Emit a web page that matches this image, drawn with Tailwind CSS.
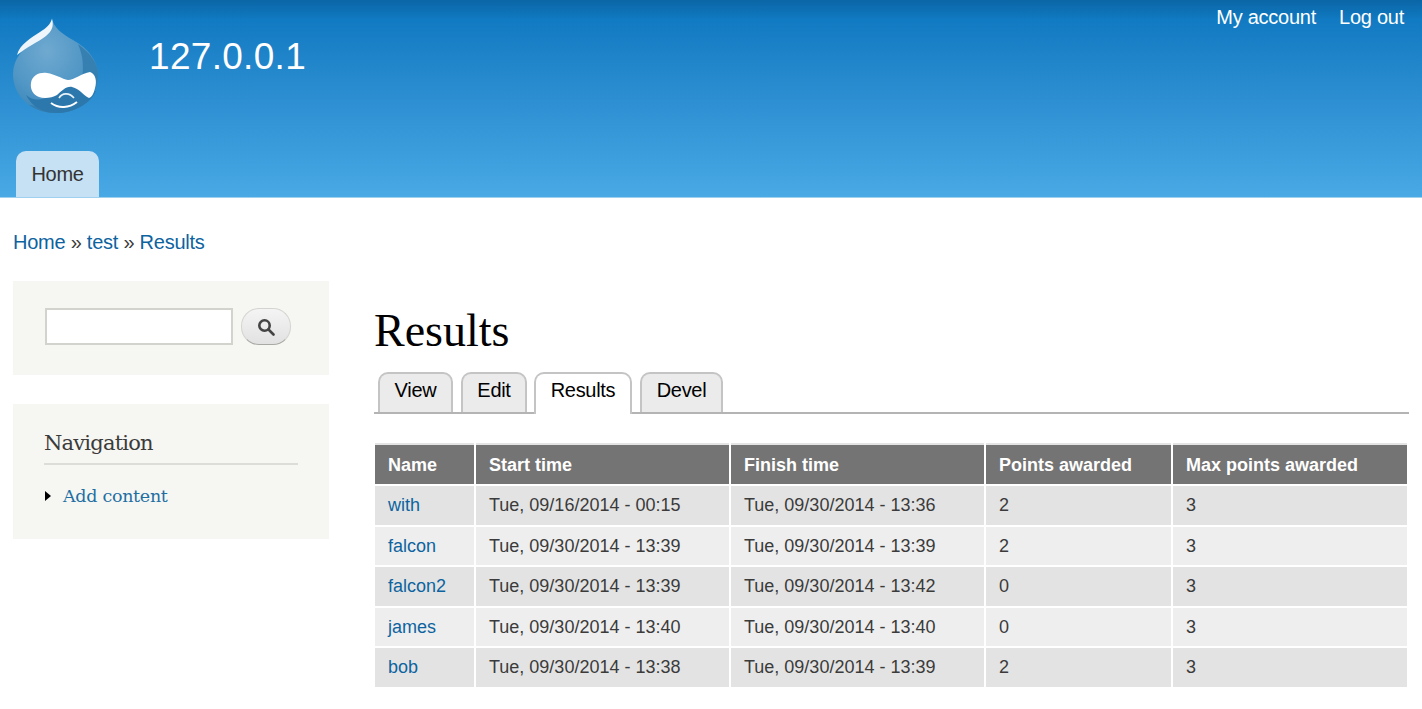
<!DOCTYPE html>
<html lang="en">
  <head>
    <meta charset="UTF-8" />
    <title>Results | 127.0.0.1</title>
    <script src="https://cdn.jsdelivr.net/npm/@tailwindcss/browser@4"></script>
  </head>
  <body class="bg-white text-[#3b3b3b] font-['Liberation_Sans',Arial,sans-serif] overflow-hidden">
    <!-- header -->
    <header class="h-[198px] border-b border-[#9fd0ee] bg-gradient-to-b from-[#0b66a6] from-0% via-[#107ac2] via-[10%] to-[#48a9e5] flex flex-col">
      <div class="flex justify-between h-[151px]">
        <div class="flex items-start">
          <svg class="ml-[12px] mt-[17px] w-[87px] h-[98px]" viewBox="0 0 87 98">
            <defs>
              <radialGradient id="drop" cx="0.4" cy="0.35" r="0.75">
                <stop offset="0" stop-color="#6fa9d0" />
                <stop offset="0.6" stop-color="#5096c5" />
                <stop offset="1" stop-color="#3381b5" />
              </radialGradient>
            </defs>
            <path d="M40 1C41 10 50 17 61 23C77 32 86 44 86 58C86 80 68 96 44 96C20 96 1 80 1 57C1 42 11 31 23 24C31 19 38 12 40 1Z" fill="url(#drop)" />
            <path d="M66 27C78 36 86 46 86 58C86 80 68 96 44 96C33 96 24 93 17 88C42 92 64 84 70 62C72 50 71 38 66 27Z" fill="#367fb1" />
            <path d="M14 78C25 88 40 80 50 70C60 66 75 72 84 74C78 88 60 96 44 96C32 96 20 90 14 78Z" fill="#2c78ad" />
            <path d="M40 2C42 9 40 14 34 19C26 25 15 30 5 38C8 27 19 21 28 15C34 11 38 8 40 2Z" fill="#eef6fb" />
            <path d="M19 66C20 58 28 55 35 56C43 57 50 62 56 63C62 63 70 56 78 55C84 57 85 65 83 71C82 76 80 80 77 81C72 79 68 72 60 70C54 69 50 74 45 78C40 81 32 82 27 80C21 78 18 72 19 66Z" fill="#fff" />
            <path d="M47 81C50 76 57 75 62 81" fill="none" stroke="#e8f3fa" stroke-width="1.6" />
            <path d="M39 86C47 92 57 91 65 85" fill="none" stroke="#fff" stroke-width="2" />
          </svg>
          <div class="ml-[50px] mt-[35px] text-[37px] leading-[44px] tracking-[0.3px] text-white">127.0.0.1</div>
        </div>
        <nav class="flex gap-[23px] pt-[6px] pr-[18px] text-[20px] leading-[23px] text-white tracking-[-0.25px]">
          <a href="#">My account</a>
          <a href="#">Log out</a>
        </nav>
      </div>
      <div class="flex pl-[16px]">
        <a href="#" class="w-[83px] h-[46px] rounded-t-[10px] bg-[#c6e0f4] text-[#333] text-[20px] leading-[46px] text-center tracking-[-0.3px]">Home</a>
      </div>
    </header>

    <!-- breadcrumb -->
    <div class="pl-[13px] pt-[32px] h-[83px] text-[20px] leading-[24px] tracking-[-0.25px] text-[#3b3b3b]">
      <a href="#" class="text-[#0d639f]">Home</a> » <a href="#" class="text-[#0d639f]">test</a> » <a href="#" class="text-[#0d639f]">Results</a>
    </div>

    <div class="flex pl-[13px] pr-[13px]">
      <!-- sidebar -->
      <aside class="w-[316px] shrink-0 flex flex-col gap-[29px]">
        <div class="h-[94px] bg-[#f6f6f2] pl-[32px] pt-[27px] flex items-start gap-[8px]">
          <input type="text" class="w-[188px] h-[37px] bg-white border-2 border-[#d3d3cd]" />
          <button class="w-[50px] h-[37px] rounded-[18px] border border-[#d4d4d0] border-b-[#a8a8a4] bg-gradient-to-b from-[#f4f4f4] to-[#e2e2e2] flex items-center justify-center">
            <svg class="w-[18px] h-[18px]" viewBox="0 0 18 18" fill="none" stroke="#444" stroke-width="2.6">
              <circle cx="7.5" cy="7.5" r="5.2" />
              <path d="M11.5 11.5L16.5 16.5" stroke-linecap="round" />
            </svg>
          </button>
        </div>
        <div class="h-[135px] bg-[#f6f6f2] pl-[31px] pr-[31px] pt-[25px] font-['DejaVu_Serif','Liberation_Serif',serif]">
          <h2 class="h-[36px] border-b-2 border-[#dcdcd8] text-[21px] leading-[28px] tracking-[-0.8px] text-[#3b3b3b]">Navigation</h2>
          <div class="flex items-center mt-[19px] leading-[24px] pl-[1px]">
            <span class="w-0 h-0 border-y-[5px] border-y-transparent border-l-[6px] border-l-black"></span>
            <a href="#" class="ml-[12px] text-[17.5px] tracking-[-0.3px] text-[#1f6fa3]">Add content</a>
          </div>
        </div>
      </aside>

      <!-- main -->
      <main class="ml-[45px] flex-1 min-w-0">
        <h1 class="mt-[19px] h-[53px] font-['Liberation_Serif',serif] text-[46px] leading-[62px] text-black">Results</h1>
        <div class="mt-[19px] h-[42px] border-b-2 border-[#b4b4b4] flex gap-[8px] pl-[4px] text-[20px] tracking-[-0.3px] text-black">
          <a href="#" class="w-[75px] h-[40px] rounded-t-[10px] border-2 border-b-0 border-[#c4c4c4] bg-[#ebebeb] text-center leading-[33px]">View</a>
          <a href="#" class="w-[66px] h-[40px] rounded-t-[10px] border-2 border-b-0 border-[#c4c4c4] bg-[#ebebeb] text-center leading-[33px]">Edit</a>
          <a href="#" class="-ml-[1px] w-[98px] h-[42px] rounded-t-[10px] border-2 border-b-0 border-[#c4c4c4] bg-white text-center leading-[33px]">Results</a>
          <a href="#" class="w-[83px] h-[40px] rounded-t-[10px] border-2 border-b-0 border-[#c4c4c4] bg-[#ebebeb] text-center leading-[33px]">Devel</a>
        </div>
        <table class="mt-[29px] -ml-[1px] w-[1034px] table-fixed border-collapse text-[18px] text-[#3b3b3b] border-t-2 border-[#e4e4e4]">
          <colgroup>
            <col class="w-[101px]" />
            <col class="w-[255px]" />
            <col class="w-[255px]" />
            <col class="w-[187px]" />
            <col class="w-[236px]" />
          </colgroup>
          <thead>
            <tr class="h-[41px] bg-[#747474] text-white font-bold text-left">
              <th class="pl-[13px] pt-[1px] border-2 border-t-0 border-white">Name</th>
              <th class="pl-[13px] pt-[1px] border-2 border-t-0 border-white">Start time</th>
              <th class="pl-[13px] pt-[1px] border-2 border-t-0 border-white">Finish time</th>
              <th class="pl-[13px] pt-[1px] border-2 border-t-0 border-white">Points awarded</th>
              <th class="pl-[13px] pt-[1px] border-2 border-t-0 border-white">Max points awarded</th>
            </tr>
          </thead>
          <tbody>
            <tr class="h-[41px] bg-[#e3e3e3]">
              <td class="pl-[13px] border-2 border-white"><a href="#" class="text-[#0d639f]">with</a></td>
              <td class="pl-[13px] border-2 border-white">Tue, 09/16/2014 - 00:15</td>
              <td class="pl-[13px] border-2 border-white">Tue, 09/30/2014 - 13:36</td>
              <td class="pl-[13px] border-2 border-white">2</td>
              <td class="pl-[13px] border-2 border-white">3</td>
            </tr>
            <tr class="h-[40px] bg-[#eeeeee]">
              <td class="pl-[13px] border-2 border-white"><a href="#" class="text-[#0d639f]">falcon</a></td>
              <td class="pl-[13px] border-2 border-white">Tue, 09/30/2014 - 13:39</td>
              <td class="pl-[13px] border-2 border-white">Tue, 09/30/2014 - 13:39</td>
              <td class="pl-[13px] border-2 border-white">2</td>
              <td class="pl-[13px] border-2 border-white">3</td>
            </tr>
            <tr class="h-[41px] bg-[#e3e3e3]">
              <td class="pl-[13px] border-2 border-white"><a href="#" class="text-[#0d639f]">falcon2</a></td>
              <td class="pl-[13px] border-2 border-white">Tue, 09/30/2014 - 13:39</td>
              <td class="pl-[13px] border-2 border-white">Tue, 09/30/2014 - 13:42</td>
              <td class="pl-[13px] border-2 border-white">0</td>
              <td class="pl-[13px] border-2 border-white">3</td>
            </tr>
            <tr class="h-[40px] bg-[#eeeeee]">
              <td class="pl-[13px] border-2 border-white"><a href="#" class="text-[#0d639f]">james</a></td>
              <td class="pl-[13px] border-2 border-white">Tue, 09/30/2014 - 13:40</td>
              <td class="pl-[13px] border-2 border-white">Tue, 09/30/2014 - 13:40</td>
              <td class="pl-[13px] border-2 border-white">0</td>
              <td class="pl-[13px] border-2 border-white">3</td>
            </tr>
            <tr class="h-[41px] bg-[#e3e3e3]">
              <td class="pl-[13px] border-2 border-white"><a href="#" class="text-[#0d639f]">bob</a></td>
              <td class="pl-[13px] border-2 border-white">Tue, 09/30/2014 - 13:38</td>
              <td class="pl-[13px] border-2 border-white">Tue, 09/30/2014 - 13:39</td>
              <td class="pl-[13px] border-2 border-white">2</td>
              <td class="pl-[13px] border-2 border-white">3</td>
            </tr>
          </tbody>
        </table>
      </main>
    </div>
  </body>
</html>
